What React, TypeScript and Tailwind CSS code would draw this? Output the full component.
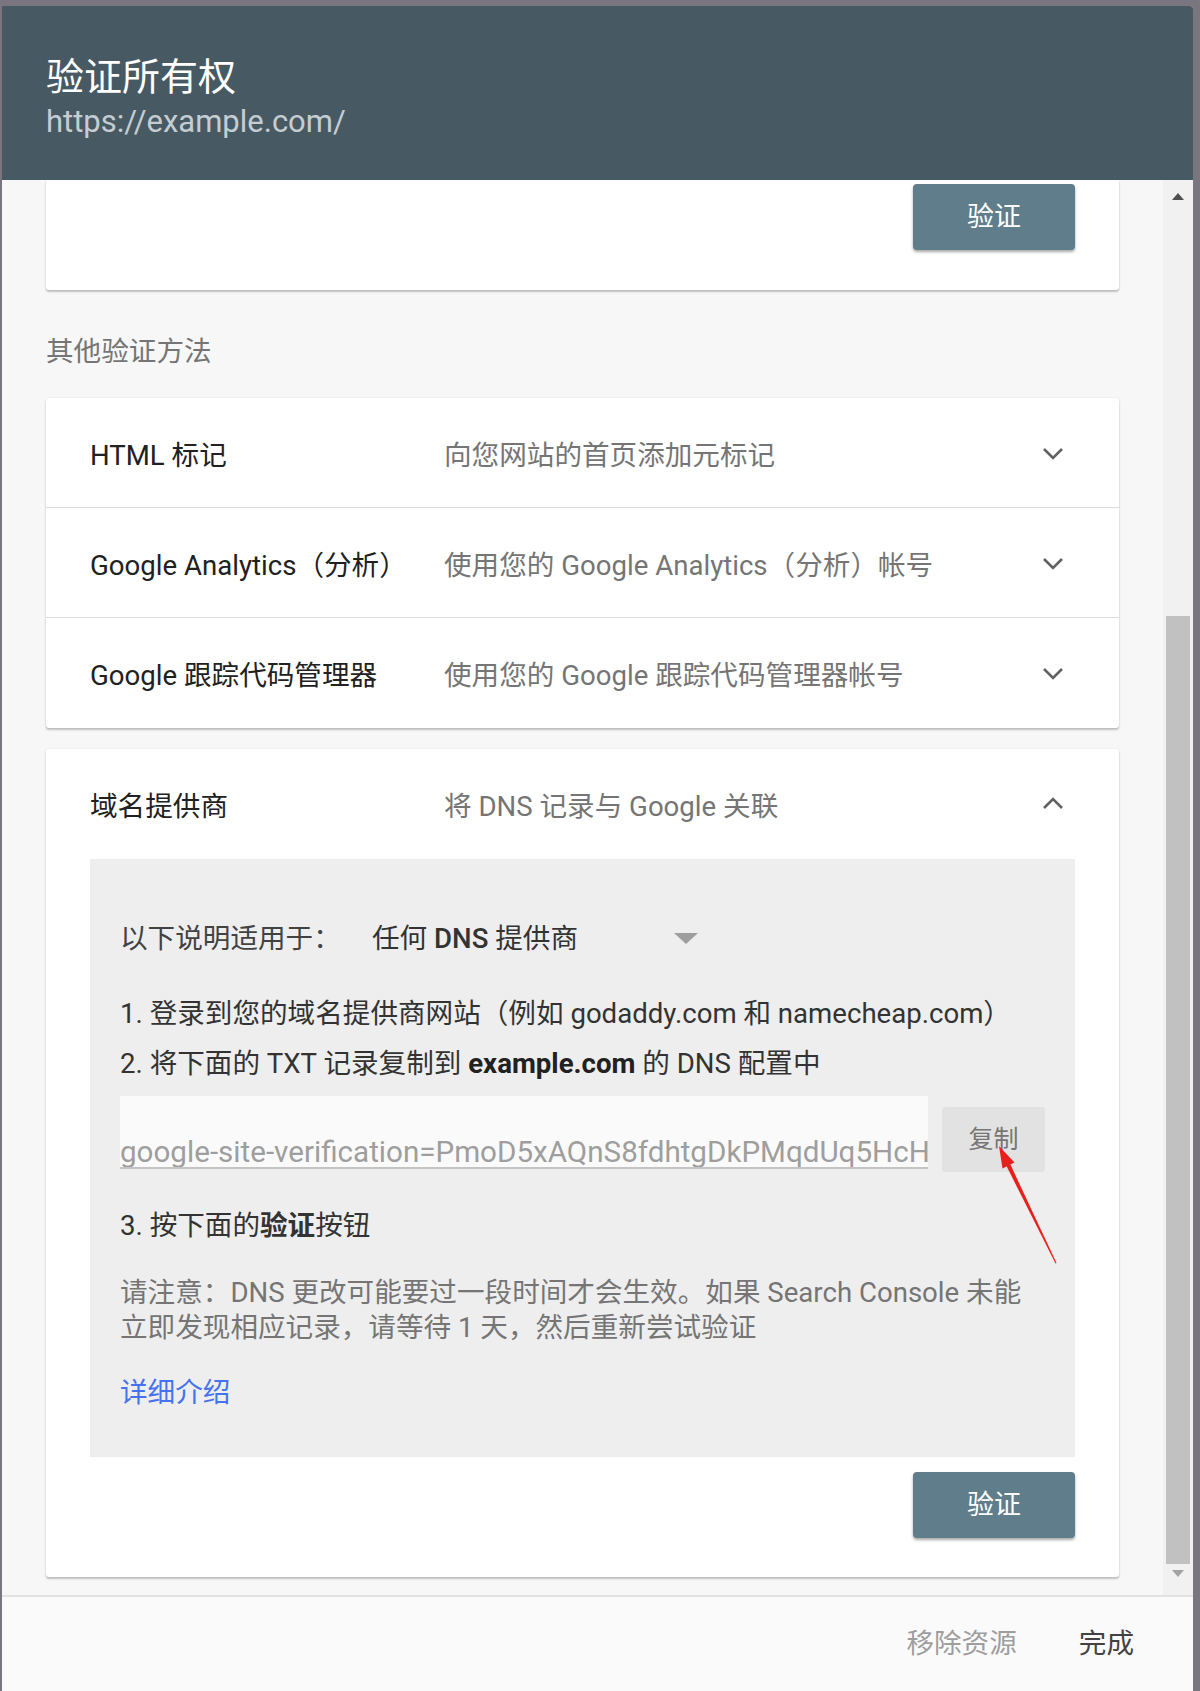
import { ReactNode } from 'react';

const methods = [
  { label: 'HTML 标记', desc: '向您网站的首页添加元标记' },
  { label: 'Google Analytics（分析）', desc: '使用您的 Google Analytics（分析）帐号' },
  { label: 'Google 跟踪代码管理器', desc: '使用您的 Google 跟踪代码管理器帐号' },
];

function Chevron({ up = false }: { up?: boolean }) {
  return (
    <svg width="24" height="16" viewBox="0 0 24 16" className="shrink-0">
      <path
        d={up ? 'M3 12 L12 3 L21 12' : 'M3 4 L12 13 L21 4'}
        fill="none"
        stroke="#616161"
        strokeWidth="2.6"
      />
    </svg>
  );
}

function VerifyButton() {
  return (
    <button className="w-[162px] h-[66px] rounded-[4px] bg-[#607d8b] text-white text-[27px] shadow-[0_2px_3px_rgba(0,0,0,0.35)]">
      验证
    </button>
  );
}

function MethodRow({ label, desc, open = false, last = false }: { label: string; desc: string; open?: boolean; last?: boolean }) {
  return (
    <div className={`h-[110px] flex items-center pt-[6px] pl-[44px] pr-[54px] ${last ? '' : 'border-b border-[#dcdcdc]'}`}>
      <div className="w-[354px] text-[27.6px] text-[#212121] whitespace-nowrap">{label}</div>
      <div className="flex-1 text-[27.6px] text-[#757575] whitespace-nowrap">{desc}</div>
      <div className="-mt-[6px]">
        <Chevron up={open} />
      </div>
    </div>
  );
}

function Card({ children, className = '' }: { children: ReactNode; className?: string }) {
  return (
    <div className={`mx-[44px] bg-white rounded-[3px] shadow-[0_2px_2px_rgba(0,0,0,0.22),0_0_2px_rgba(0,0,0,0.1)] ${className}`}>
      {children}
    </div>
  );
}

function RedArrow() {
  // hand-drawn pointer over the copy button
  return (
    <svg width="100" height="150" viewBox="0 0 100 150" className="absolute left-[890px] top-[270px] pointer-events-none">
      <polygon points="25.5,35 29.5,33.5 76.5,134 75.5,134.5" fill="#e8201c" />
      <polygon points="19,17 34.5,33.5 22.5,39.5" fill="#e8201c" />
    </svg>
  );
}

function DnsPanel() {
  return (
    <div className="relative mx-[44px] h-[598px] bg-[#eeeeee] pl-[30px] pr-[30px] pt-[62px] text-[27.6px] text-[#333333]">
      <div className="flex items-center h-[36px] leading-[36px]">
        <span className="w-[252px] text-[#424242]">以下说明适用于：</span>
        <span className="w-[302px] text-[#333333]">
          任何 <span className="font-medium">DNS</span> 提供商
        </span>
        <svg width="24" height="12" viewBox="0 0 24 12">
          <polygon points="0,0 24,0 12,11" fill="#9e9e9e" />
        </svg>
      </div>
      <div className="mt-[39px] leading-[36px] whitespace-nowrap">
        1. 登录到您的域名提供商网站（例如 godaddy.com 和 namecheap.com）
      </div>
      <div className="mt-[14px] leading-[36px] whitespace-nowrap">
        2. 将下面的 TXT 记录复制到 <b className="font-bold text-[#212121]">example.com</b> 的 DNS 配置中
      </div>
      <div className="mt-[14px] flex items-start gap-[14px]">
        <div className="w-[808px] h-[73px] bg-[#fafafa] border-b-2 border-[#c4c4c4] pt-[39px] overflow-hidden">
          <div className="text-[29.6px] leading-[34px] text-[#9e9e9e] whitespace-nowrap">
            google-site-verification=PmoD5xAQnS8fdhtgDkPMqdUq5HcHk3vLq0aPz7xT2wE
          </div>
        </div>
        <button className="mt-[11px] w-[103px] h-[65px] rounded-[3px] bg-[#e2e2e2] text-[25px] text-[#757575]">
          复制
        </button>
      </div>
      <div className="mt-[36px] leading-[36px]">
        3. 按下面的<b className="font-bold">验证</b>按钮
      </div>
      <div className="mt-[31px] leading-[35px] text-[#757575]">
        请注意：DNS 更改可能要过一段时间才会生效。如果 Search Console 未能
        <br />
        立即发现相应记录，请等待 1 天，然后重新尝试验证
      </div>
      <div className="mt-[30px] leading-[36px] text-[#4572ee]">详细介绍</div>
      <RedArrow />
    </div>
  );
}

function Scrollbar() {
  return (
    <div className="w-[30px] shrink-0 bg-[#f1f1f1] flex flex-col items-center">
      <svg width="14" height="10" viewBox="0 0 14 10" className="mt-[12px]">
        <polygon points="7,1 13,8 1,8" fill="#505050" />
      </svg>
      <div className="mt-[414px] w-[24px] h-[948px] bg-[#c1c1c1]" />
      <svg width="14" height="10" viewBox="0 0 14 10" className="mt-[4px]">
        <polygon points="1,2 13,2 7,9" fill="#a3a3a3" />
      </svg>
    </div>
  );
}

export default function App() {
  return (
    <div className="w-[1200px] h-[1691px] overflow-hidden bg-[#7a7680] pt-[6px] pl-[2px] pr-[7px] font-[Roboto,'Noto_Sans_CJK_SC',sans-serif]">
      <div className="h-[1685px] flex flex-col bg-[#f7f7f7] rounded-tr-[3px] overflow-hidden">
        <header className="h-[174px] shrink-0 bg-[#475a64] pl-[44px] pt-[49px]">
          <h1 className="text-[38px] leading-[44px] text-white">验证所有权</h1>
          <div className="mt-[5px] text-[31px] leading-[36px] text-[#c5cdd2]">https://example.com/</div>
        </header>

        <div className="flex-1 min-h-0 flex">
          <main className="flex-1 overflow-hidden">
            <Card className="h-[110px] rounded-t-none flex justify-end items-start pt-[4px] pr-[44px]">
              <VerifyButton />
            </Card>

            <div className="mt-[45px] ml-[44px] text-[27.6px] leading-[34px] text-[#757575]">其他验证方法</div>

            <Card className="mt-[29px]">
              {methods.map((m, i) => (
                <MethodRow key={m.label} label={m.label} desc={m.desc} last={i === methods.length - 1} />
              ))}
            </Card>

            <Card className="mt-[21px] pb-[39px]">
              <MethodRow label="域名提供商" desc="将 DNS 记录与 Google 关联" open last />
              <DnsPanel />
              <div className="mt-[15px] flex justify-end pr-[44px]">
                <VerifyButton />
              </div>
            </Card>
          </main>
          <Scrollbar />
        </div>

        <footer className="h-[96px] shrink-0 border-t-2 border-[#e2e2e2] bg-[#fafafa] flex items-center justify-end gap-[62px] pr-[59px] text-[27.6px]">
          <button className="text-[#9e9e9e]">移除资源</button>
          <button className="text-[#424242]">完成</button>
        </footer>
      </div>
    </div>
  );
}
